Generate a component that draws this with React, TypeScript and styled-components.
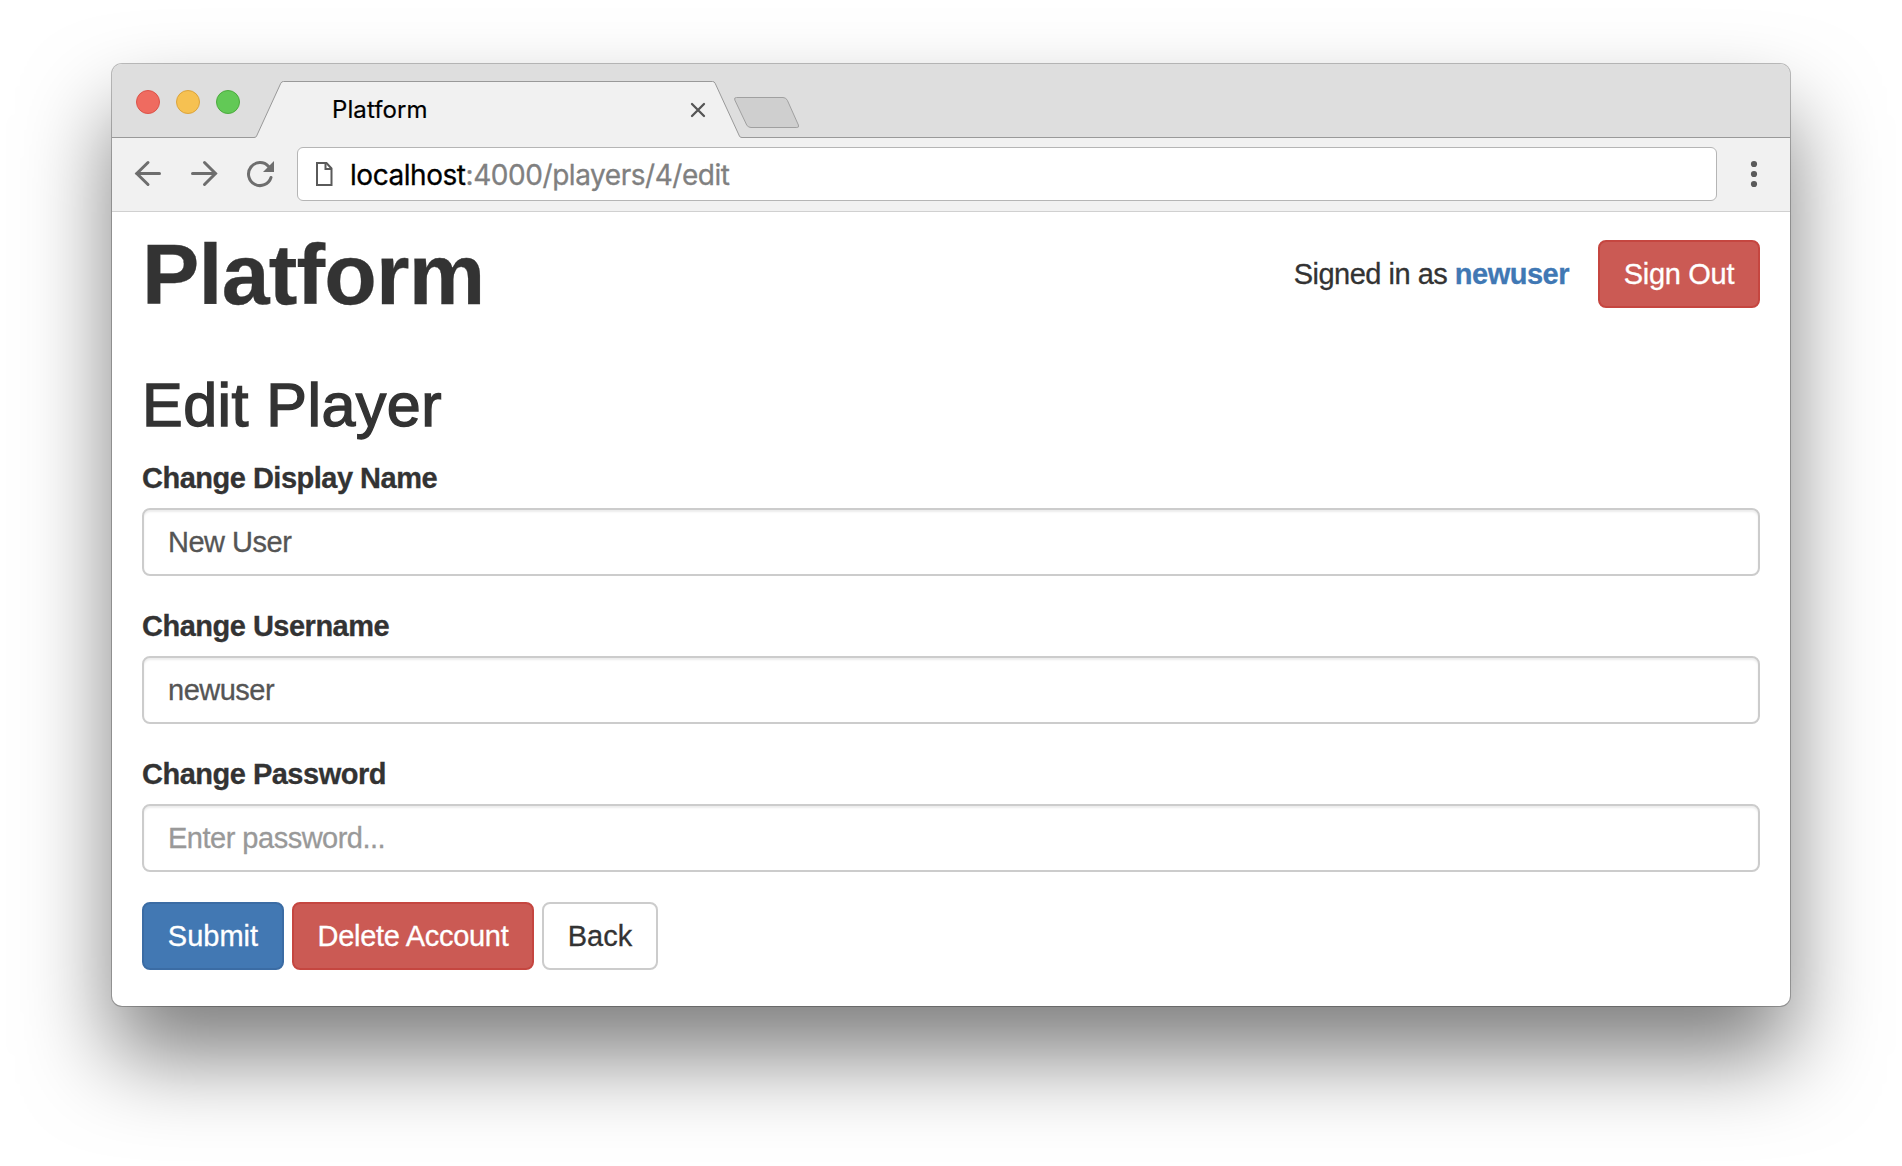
import React from 'react';
import styled, { createGlobalStyle } from 'styled-components';

const GlobalStyle = createGlobalStyle`
  *, *::before, *::after { box-sizing: border-box; }
  html, body { margin: 0; background: #fff; }
  body { overflow: hidden; }
`;

const Desktop = styled.div`
  width: 1902px;
  height: 1166px;
  padding: 64px 112px 160px;
  background: #fff;
  font-family: 'Liberation Sans', Arial, sans-serif;
  font-size: 29px;
  line-height: 40px;
  letter-spacing: -0.5px;
  color: #333;
`;

const BrowserWindow = styled.div`
  display: flex;
  flex-direction: column;
  height: 942px;
  border-radius: 10px;
  background: #fff;
  box-shadow: 0 0 0 1px rgba(0, 0, 0, 0.25), 0 50px 88px rgba(0, 0, 0, 0.51);
`;

const TabStrip = styled.div`
  display: flex;
  flex: none;
  height: 74px;
  padding-left: 24px;
  border-radius: 10px 10px 0 0;
  background: #dedede;
  box-shadow: inset 0 -1px #999;
`;

const TrafficLights = styled.div`
  display: flex;
  gap: 16px;
  padding-top: 26px;
  margin-right: 14px;
`;

const Light = styled.span<{ $fill: string; $edge: string }>`
  width: 24px;
  height: 24px;
  border-radius: 50%;
  border: 1px solid ${(p) => p.$edge};
  background: ${(p) => p.$fill};
`;

const Tab = styled.div`
  position: relative;
  display: flex;
  align-items: center;
  justify-content: space-between;
  width: 488px;
  height: 58px;
  margin-top: 16px;
  padding: 2px 36px 0 78px;
`;

const TabShape = styled.svg`
  position: absolute;
  inset: 0;
`;

const TabTitle = styled.span`
  position: relative;
  font-family: Inter, 'Noto Sans', sans-serif;
  font-size: 24px;
  line-height: 28px;
  letter-spacing: 0.1px;
  color: #000;
  -webkit-text-stroke: 0.2px;
`;

const CloseIcon = styled.svg`
  position: relative;
`;

const NewTabShape = styled.svg`
  margin: 32px 0 0 -9px;
`;

const Toolbar = styled.div`
  display: flex;
  flex: none;
  align-items: center;
  height: 74px;
  padding: 0 29px 2px 21px;
  background: #f1f1f1;
  border-bottom: 1px solid #d0d0d0;
`;

const NavIcons = styled.div`
  display: flex;
  gap: 26px;
  width: 164px;
  padding-bottom: 2px;
`;

const AddressBar = styled.div`
  display: flex;
  align-items: center;
  width: 1420px;
  height: 54px;
  padding-left: 18px;
  border: 1px solid #b5b5b5;
  border-radius: 6px;
  background: #fff;
`;

const Url = styled.span`
  margin-left: 17px;
  padding-top: 2px;
  font-family: Inter, 'Noto Sans', sans-serif;
  font-size: 28px;
  line-height: 34px;
  letter-spacing: -0.45px;
  color: #808080;
  -webkit-text-stroke: 0.3px;
`;

const Host = styled.span`
  color: #000;
`;

const MenuIcon = styled.svg`
  margin-left: auto;
`;

const Page = styled.main`
  padding: 16px 30px 0;
  -webkit-text-stroke: 0.3px;
`;

const Header = styled.header`
  display: flex;
  align-items: center;
  height: 92px;
  margin-bottom: 52px;
`;

const Brand = styled.h1`
  margin: 0 auto 0 0;
  font-size: 86px;
  line-height: 92px;
  font-weight: bold;
  letter-spacing: -0.8px;
`;

const SignedIn = styled.span`
  margin-right: 29px;
`;

const UserLink = styled.a`
  color: #4078b4;
  font-weight: bold;
  text-decoration: none;
`;

const Title = styled.h2`
  margin: 0 0 20px;
  font-size: 61px;
  line-height: 66px;
  font-weight: normal;
  letter-spacing: 0.45px;
  -webkit-text-stroke: 1.4px #333;
`;

const Group = styled.div`
  margin-bottom: 30px;
`;

const Label = styled.label`
  display: block;
  margin-bottom: 10px;
  font-weight: bold;
`;

const Input = styled.input`
  display: block;
  width: 100%;
  height: 68px;
  padding: 0 24px;
  border: 2px solid #ccc;
  border-radius: 8px;
  outline: none;
  background: #fff;
  box-shadow: inset 0 2px 2px rgba(0, 0, 0, 0.075);
  color: #555;
  font: inherit;
  letter-spacing: inherit;

  &::placeholder {
    color: #999;
    opacity: 1;
  }
`;

const Actions = styled.div`
  display: flex;
  gap: 8px;
`;

const tones = {
  primary: { fill: '#4278b3', edge: '#3b6ca4', text: '#fff' },
  danger: { fill: '#cb5a54', edge: '#c54640', text: '#fff' },
  plain: { fill: '#fff', edge: '#ccc', text: '#333' },
};

const Button = styled.button<{ $tone: keyof typeof tones; $width: number; $spacing?: string }>`
  width: ${(p) => p.$width}px;
  height: 68px;
  padding: 0;
  border: 2px solid ${(p) => tones[p.$tone].edge};
  border-radius: 8px;
  background: ${(p) => tones[p.$tone].fill};
  color: ${(p) => tones[p.$tone].text};
  font: inherit;
  letter-spacing: ${(p) => p.$spacing ?? '-0.3px'};
`;

const NavIcon = ({ children }: { children: React.ReactNode }) => (
  <svg width="30" height="30" viewBox="0 0 30 30" fill="none" stroke="#6e6e6e" strokeWidth="3" strokeLinecap="round">
    {children}
  </svg>
);

export default function App() {
  return (
    <Desktop>
      <GlobalStyle />
      <BrowserWindow>
        <TabStrip>
          <TrafficLights>
            <Light $fill="#ef6b60" $edge="#dc5349" />
            <Light $fill="#f6c151" $edge="#dca43c" />
            <Light $fill="#62c956" $edge="#4cab3e" />
          </TrafficLights>
          <Tab>
            <TabShape width="488" height="58" viewBox="0 0 488 58">
              <path
                d="M0 58V57.5Q2 57.5 2.6 56L26.8 3.2Q27.6 1.5 29.5 1.5H458.5Q460.3 1.5 461.1 3.2L485.4 56Q486 57.5 488 57.5V58Z"
                fill="#f1f1f1"
              />
              <path
                d="M0 57.5Q2 57.5 2.6 56L26.8 3.2Q27.6 1.5 29.5 1.5H458.5Q460.3 1.5 461.1 3.2L485.4 56Q486 57.5 488 57.5"
                fill="none"
                stroke="#999"
              />
            </TabShape>
            <TabTitle>Platform</TabTitle>
            <CloseIcon width="16" height="16" viewBox="0 0 16 16">
              <path d="M2 2L14 14M14 2L2 14" stroke="#555" strokeWidth="2.3" strokeLinecap="round" />
            </CloseIcon>
          </Tab>
          <NewTabShape width="68" height="34" viewBox="0 0 68 34">
            <path
              d="M3.5 1.5H50Q53 1.5 54.4 4.4L65.4 29Q66.5 31.5 63.8 31.5H18Q15 31.5 13.7 29L1.8 4Q.8 1.5 3.5 1.5Z"
              fill="#cfcfcf"
              stroke="#a0a0a0"
            />
          </NewTabShape>
        </TabStrip>
        <Toolbar>
          <NavIcons>
            <NavIcon>
              <path d="M26.5 15.5H4" />
              <path d="M15 4.5L3.8 15.5L15 26.500" />
            </NavIcon>
            <NavIcon>
              <path d="M3.5 15.5H26" />
              <path d="M15.500 4.500L26.500 15.500L15.500 26.500" />
            </NavIcon>
            <NavIcon>
              <path d="M23.600 8.400A11.500 11.500 0 1 0 26 19.500" />
              <path d="M29 3V14H18Z" fill="#6e6e6e" stroke="none" />
            </NavIcon>
          </NavIcons>
          <AddressBar>
            <svg width="17" height="26" viewBox="0 0 17 26" fill="none" stroke="#5a5a5a" strokeWidth="2">
              <path d="M1 2H10.500L15.500 7.500V24H1Z" />
              <path d="M9.500 2V8H15.500" />
            </svg>
            <Url>
              <Host>localhost</Host>:4000/players/4/edit
            </Url>
          </AddressBar>
          <MenuIcon width="14" height="30" viewBox="0 0 14 30" fill="#5a5a5a">
            <circle cx="7" cy="5" r="3.1" />
            <circle cx="7" cy="15" r="3.1" />
            <circle cx="7" cy="25" r="3.1" />
          </MenuIcon>
        </Toolbar>
        <Page>
          <Header>
            <Brand>Platform</Brand>
            <SignedIn>
              Signed in as <UserLink>newuser</UserLink>
            </SignedIn>
            <Button $tone="danger" $width={162}>Sign Out</Button>
          </Header>
          <Title>Edit Player</Title>
          <Group>
            <Label htmlFor="display">Change Display Name</Label>
            <Input id="display" defaultValue="New User" />
          </Group>
          <Group>
            <Label htmlFor="username">Change Username</Label>
            <Input id="username" defaultValue="newuser" />
          </Group>
          <Group>
            <Label htmlFor="password">Change Password</Label>
            <Input id="password" type="password" placeholder="Enter password..." />
          </Group>
          <Actions>
            <Button $tone="primary" $width={142} $spacing="0px">Submit</Button>
            <Button $tone="danger" $width={242}>Delete Account</Button>
            <Button $tone="plain" $width={116} $spacing="0px">Back</Button>
          </Actions>
        </Page>
      </BrowserWindow>
    </Desktop>
  );
}
